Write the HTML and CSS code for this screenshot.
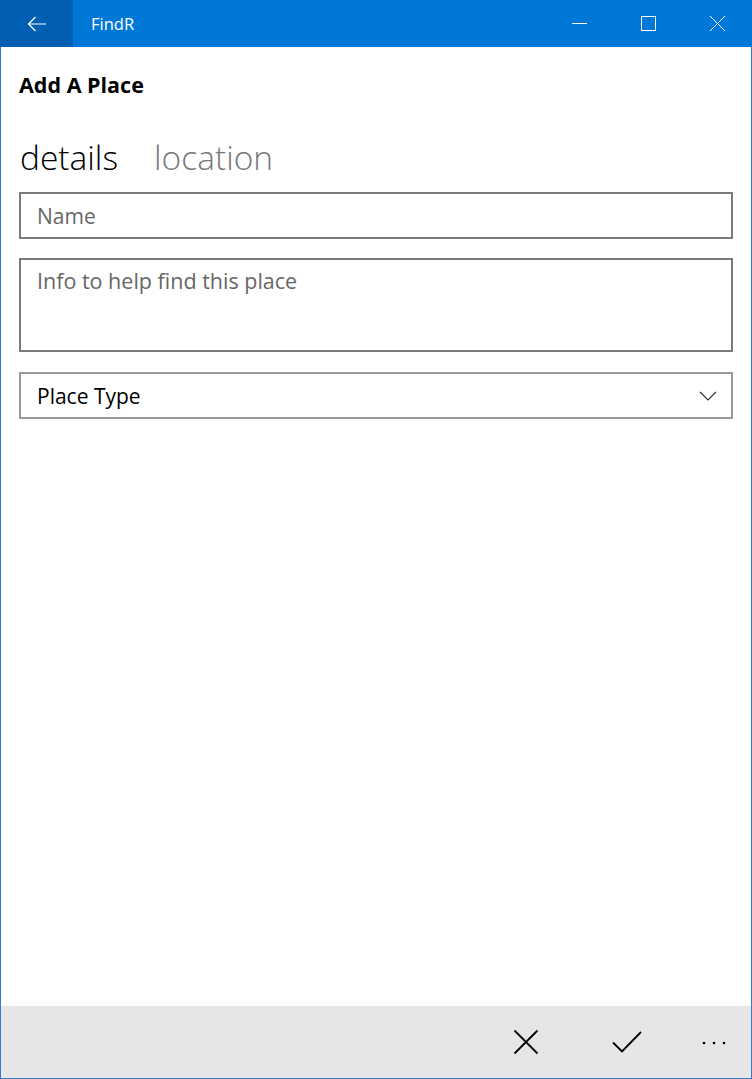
FILE: index.html
```html
<!DOCTYPE html>
<html>
<head>
<meta charset="utf-8">
<link rel="stylesheet" href="styles.css">
</head>
<body>
<div class="window">
  <header class="titlebar">
    <div class="back">
      <svg width="20" height="16" viewBox="0 0 20 16"><path d="M19 8H1.5M8.5 1L1.5 8l7 7" fill="none" stroke="#fff" stroke-width="1.2"/></svg>
    </div>
    <div class="apptitle">FindR</div>
    <div class="caption">
      <div class="cbtn"><svg width="17" height="17" viewBox="0 0 17 17"><path d="M1 8.5h15" stroke="#fff" stroke-width="1"/></svg></div>
      <div class="cbtn"><svg width="17" height="17" viewBox="0 0 17 17"><rect x="1.5" y="1.5" width="14" height="14" fill="none" stroke="#fff" stroke-width="1"/></svg></div>
      <div class="cbtn"><svg width="17" height="17" viewBox="0 0 17 17"><path d="M1 1l15 15M16 1L1 16" stroke="#fff" stroke-width="1"/></svg></div>
    </div>
  </header>
  <main class="content">
    <h1 class="pagetitle">Add A Place</h1>
    <nav class="pivot">
      <span class="pivot-item active">details</span>
      <span class="pivot-item">location</span>
    </nav>
    <div class="field textbox"><span class="placeholder">Name</span></div>
    <div class="field textarea"><span class="placeholder">Info to help find this place</span></div>
    <div class="field combo">
      <span class="value">Place Type</span>
      <svg width="18" height="10" viewBox="0 0 18 10"><path d="M1 1l8 8 8-8" fill="none" stroke="#333" stroke-width="1.2"/></svg>
    </div>
  </main>
  <footer class="appbar">
    <div class="abtn"><svg width="26" height="26" viewBox="0 0 26 26"><path d="M1.5 1.5l23 23M24.5 1.5l-23 23" stroke="#000" stroke-width="1.8"/></svg></div>
    <div class="abtn"><svg width="30" height="24" viewBox="0 0 30 24"><path d="M1 12.5l9 9L29 2" fill="none" stroke="#000" stroke-width="1.8"/></svg></div>
    <div class="abtn more"><svg width="24" height="4" viewBox="0 0 24 4"><circle cx="2" cy="2" r="1.3" fill="#000"/><circle cx="12" cy="2" r="1.3" fill="#000"/><circle cx="22" cy="2" r="1.3" fill="#000"/></svg></div>
  </footer>
</div>
</body>
</html>
```

FILE: styles.css
```css
* { box-sizing: border-box; }
html, body { margin: 0; padding: 0; background: #fff; }
body { font-family: "Open Sans", "Noto Sans", sans-serif; }

.window {
  width: 752px;
  height: 1079px;
  display: flex;
  flex-direction: column;
  border: 1px solid #2b7fd4;
  border-top: none;
  background: #fff;
}

.titlebar {
  height: 47px;
  flex: none;
  display: flex;
  align-items: stretch;
  background: #0078d7;
  margin: 0 -1px;
}
.back {
  width: 73px;
  display: flex;
  align-items: center;
  justify-content: center;
  background: #005fb2;
}
.apptitle {
  flex: 1;
  color: #fff;
  font-size: 16.5px;
  line-height: 47px;
  padding-left: 18px;
}
.caption { display: flex; }
.cbtn {
  width: 69px;
  display: flex;
  align-items: center;
  justify-content: center;
}

.content {
  flex: 1;
  padding: 0 18px;
}
.pagetitle {
  margin: 0;
  padding-top: 23px;
  font-size: 21.5px;
  font-weight: 700;
  line-height: 30px;
  color: #000;
}
.pivot {
  display: flex;
  gap: 36px;
  margin-top: 32px;
  height: 50px;
  align-items: center;
  padding-left: 1px;
}
.pivot-item {
  font-size: 33.5px;
  font-weight: 300;
  color: #777;
  line-height: 50px;
}
.pivot-item.active { color: #000; }

.field {
  border: 2px solid #7a7a7a;
  background: #fff;
  font-size: 21px;
}
.textbox {
  margin-top: 10px;
  height: 47px;
  display: flex;
  align-items: center;
  padding-left: 16px;
}
.textarea {
  margin-top: 19px;
  height: 94px;
  padding: 6px 16px;
  font-size: 21.5px;
}
.placeholder { color: #666; }
.combo {
  margin-top: 20px;
  height: 47px;
  border-color: #999;
  display: flex;
  align-items: center;
  justify-content: space-between;
  padding: 0 14px 0 16px;
  color: #000;
}

.appbar {
  flex: none;
  height: 72px;
  background: #e6e6e6;
  display: flex;
  justify-content: flex-end;
  align-items: center;
}
.abtn {
  width: 101px;
  display: flex;
  justify-content: center;
  align-items: center;
  height: 72px;
}
.abtn.more { width: 74px; padding-top: 2px; }
```
